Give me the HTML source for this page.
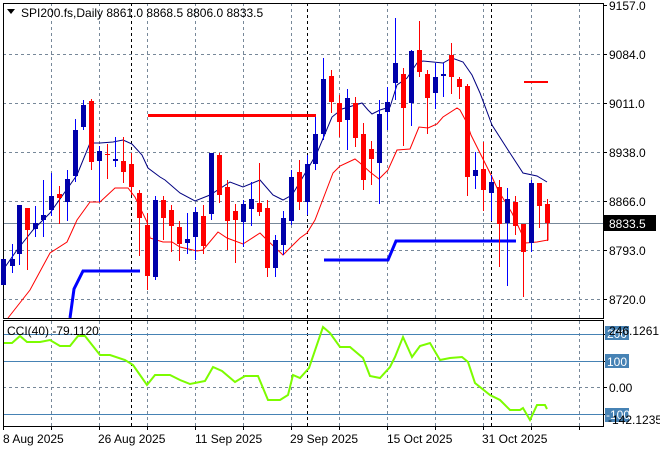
<!DOCTYPE html>
<html><head><meta charset="utf-8"><style>
html,body{margin:0;padding:0;background:#fff;}
svg{display:block;font-family:"Liberation Sans",Tahoma,sans-serif;font-size:12px;}
</style></head><body>
<svg width="660" height="450" viewBox="0 0 660 450" xmlns="http://www.w3.org/2000/svg">
<rect width="660" height="450" fill="#fff"/>
<g stroke="#778899" stroke-width="1" stroke-dasharray="3,3" fill="none">
<path d="M3 54.5H603M3 103.5H603M3 152.5H603M3 201.5H603M3 250.5H603M3 299.5H603M3 387.5H603"/>
<path d="M51.5 3V426M99.5 3V426M147.5 3V426M195.5 3V426M243.5 3V426M291.5 3V426M339.5 3V426M387.5 3V426M435.5 3V426M483.5 3V426M531.5 3V426M579.5 3V426"/>
</g>
<g stroke="#000" stroke-width="1" stroke-dasharray="3,3"><path d="M131.5 3V426M307.5 3V426M491.5 3V426"/></g>
<path d="M3 223.5H603" stroke="#778899"/>
<g stroke="#4682b4"><path d="M3 334.5H603M3 361.5H603M3 414.5H603"/></g>
<!-- MAs -->
<polyline fill="none" stroke="#000080" stroke-width="1" points="3,270 17,250 33,230 50,213 77,175 90,143 100,143 113,142 123,140 132,144 142,155 148,168 160,177 165,180 180,193 195,201 210,195 230,182 243,187 260,180 273,195 283,200 292,195 300,182 317,153 332,117 342,109 362,103 368,110 372,114 380,110 390,107 397,85 407,78 417,63 423,61 443,63 452,58 463,62 472,75 480,93 492,125 508,150 523,173 537,176 547,182"/>
<polyline fill="none" stroke="#ff0000" stroke-width="1" points="8,318 30,290 50,253 67,242 77,220 90,202 100,202 115,188 128,188 135,197 147,222 150,238 163,242 172,242 180,247 197,251 203,250 218,232 227,238 243,244 260,233 267,240 283,255 300,238 307,233 315,220 333,173 340,166 355,159 360,163 370,172 379,179 388,170 397,150 410,149 419,127 428,128 437,124 443,117 457,108 460,110 467,123 471,135 480,153 492,177 498,190 512,213 520,230 526,243 537,242 548,240 548,223"/>
<!-- candles -->
<g id="c"></g>
<path d="M148 115.5H316" stroke="#f00" stroke-width="3"/>
<path d="M524 82H548" stroke="#f00" stroke-width="2"/>
<polyline fill="none" stroke="#0000ff" stroke-width="3" points="70,318 74,289 83,271 140,271"/>
<polyline fill="none" stroke="#0000ff" stroke-width="3" points="324,260 388,260 396,241 516,241"/>
<!-- CCI -->
<polyline fill="none" stroke="#7cfc00" stroke-width="2" points="3,343 12,343 20,336 27,342 40,342 50,340 60,346 70,346 78,336 85,336 100,355 110,355 125,360 133,365 140,375 147,385 155,375 170,375 180,380 190,384 205,381 213,367 222,371 235,382 245,376 258,376 268,400 280,400 288,395 293,375 300,378 309,368 323,327 330,333 340,347 350,347 363,358 370,376 380,378 390,367 395,357 403,337 412,357 420,346 430,343 440,360 450,358 462,357 468,362 475,383 490,395 500,400 510,410 520,410 523,408 530,420 537,405 545,405 547,409"/>
<!-- frames -->
<g stroke="#000" fill="none" stroke-width="1">
<rect x="3.5" y="3.5" width="600" height="315"/>
<rect x="3.5" y="320.5" width="600" height="106"/>
</g>
<g stroke="#000"><path d="M603 5.5h4M603 54.5h4M603 103.5h4M603 152.5h4M603 201.5h4M603 250.5h4M603 299.5h4M603 334.5h4M603 361.5h4M603 387.5h4M603 414.5h4M3.5 426v4M51.5 426v4M99.5 426v4M147.5 426v4M195.5 426v4M243.5 426v4M291.5 426v4M339.5 426v4M387.5 426v4M435.5 426v4M483.5 426v4M531.5 426v4M579.5 426v4"/></g>
<!-- labels -->
<path d="M7 9h8l-4 5z" fill="#000"/>
<text x="21" y="17" fill="#000">SPI200.fs,Daily  8861.0 8868.5 8806.0 8833.5</text>
<g fill="#000">
<text x="609" y="10">9157.0</text>
<text x="609" y="59">9084.0</text>
<text x="609" y="108">9011.0</text>
<text x="609" y="157">8938.0</text>
<text x="609" y="206">8866.0</text>
<text x="609" y="255">8793.0</text>
<text x="609" y="304">8720.0</text>
</g>
<rect x="604" y="215" width="52" height="16" fill="#000"/>
<text x="609" y="228" fill="#fff">8833.5</text>
<rect x="605" y="326" width="24" height="14" fill="#4682b4"/>
<text x="607" y="338" fill="#fff">200</text>
<text x="609" y="335" fill="#000">246.1261</text>
<rect x="605" y="354" width="24" height="14" fill="#4682b4"/>
<text x="607" y="366" fill="#fff">100</text>
<text x="609" y="392" fill="#000">0.00</text>
<rect x="605" y="408" width="24" height="14" fill="#4682b4"/>
<text x="606" y="419" fill="#fff">-100</text>
<text x="608" y="424" fill="#000">-142.1235</text>
<text x="7" y="335" fill="#000">CCI(40) -79.1120</text>
<g fill="#000">
<text x="3" y="443">8 Aug 2025</text>
<text x="98" y="443">26 Aug 2025</text>
<text x="195" y="443">11 Sep 2025</text>
<text x="290" y="443">29 Sep 2025</text>
<text x="387" y="443">15 Oct 2025</text>
<text x="482" y="443">31 Oct 2025</text>
</g>
<g id="cc">
<!-- b/r x bodyTop bodyBot wickTop wickBot -->
</g>
<g>
<path stroke="#0000ff" d="M3.5 259V285M12.5 244V273M19.5 205V265M35.5 206V237M43.5 180V237M51.5 173V216M67.5 170V221M75.5 119V182M83.5 100V130M99.5 146V202M115.5 137V167M155.5 196V280M187.5 213V254M195.5 207V260M211.5 153V220M243.5 200V247M251.5 182V226M275.5 235V277M283.5 211V255M291.5 170V225M307.5 155V215M315.5 117V170M323.5 58V140M347.5 89V150M379.5 100V204M387.5 87V130M395.5 18V100M411.5 50V126M435.5 63V109M443.5 63V97M475.5 152V189M491.5 175V221M507.5 188V286M531.5 180V252"/>
<path stroke="#ff0000" d="M27.5 208V270M59.5 186V224M91.5 99V170M107.5 144V179M123.5 137V183M131.5 153V195M139.5 190V256M147.5 213V290M163.5 196V240M171.5 205V252M179.5 221V261M203.5 205V254M219.5 153V203M227.5 180V250M235.5 204V263M259.5 163V216M267.5 200V277M299.5 160V210M331.5 70V113M339.5 95V137M355.5 97V147M363.5 123V190M371.5 141V185M403.5 68V146M419.5 21V77M427.5 70V134M451.5 43V94M459.5 77V99M467.5 84V196M483.5 142V211M499.5 180V267M515.5 196V235M523.5 224V297M539.5 183V228M547.5 199V241"/>
<g fill="#0000aa">
<rect x="1" y="259" width="5" height="26"/><rect x="10" y="259" width="5" height="7"/><rect x="17" y="205" width="5" height="49"/><rect x="33" y="223" width="5" height="6"/><rect x="41" y="215" width="5" height="5"/><rect x="49" y="196" width="5" height="14"/><rect x="65" y="179" width="5" height="23"/><rect x="73" y="130" width="5" height="46"/><rect x="81" y="105" width="5" height="22"/><rect x="97" y="151" width="5" height="10"/><rect x="113" y="159" width="5" height="2"/><rect x="153" y="200" width="5" height="77"/><rect x="185" y="239" width="5" height="4"/><rect x="193" y="212" width="5" height="25"/><rect x="209" y="153" width="5" height="61"/><rect x="241" y="204" width="5" height="18"/><rect x="249" y="199" width="5" height="10"/><rect x="273" y="240" width="5" height="28"/><rect x="281" y="218" width="5" height="27"/><rect x="289" y="177" width="5" height="44"/><rect x="305" y="164" width="5" height="38"/><rect x="313" y="134" width="5" height="30"/><rect x="321" y="79" width="5" height="55"/><rect x="345" y="98" width="5" height="22"/><rect x="377" y="114" width="5" height="49"/><rect x="385" y="102" width="5" height="10"/><rect x="393" y="63" width="5" height="20"/><rect x="409" y="51" width="5" height="52"/><rect x="433" y="77" width="5" height="16"/><rect x="441" y="74" width="5" height="2"/><rect x="473" y="170" width="5" height="6"/><rect x="489" y="182" width="5" height="11"/><rect x="505" y="199" width="5" height="24"/><rect x="529" y="183" width="5" height="60"/>
</g>
<g fill="#ff0000">
<rect x="25" y="208" width="5" height="22"/><rect x="57" y="194" width="5" height="4"/><rect x="89" y="101" width="5" height="61"/><rect x="105" y="154" width="5" height="1"/><rect x="121" y="161" width="5" height="11"/><rect x="129" y="164" width="5" height="23"/><rect x="137" y="193" width="5" height="25"/><rect x="145" y="225" width="5" height="51"/><rect x="161" y="200" width="5" height="18"/><rect x="169" y="210" width="5" height="16"/><rect x="177" y="227" width="5" height="17"/><rect x="201" y="216" width="5" height="30"/><rect x="217" y="155" width="5" height="40"/><rect x="225" y="187" width="5" height="34"/><rect x="233" y="211" width="5" height="9"/><rect x="257" y="203" width="5" height="9"/><rect x="265" y="208" width="5" height="60"/><rect x="297" y="172" width="5" height="30"/><rect x="329" y="76" width="5" height="26"/><rect x="337" y="103" width="5" height="19"/><rect x="353" y="103" width="5" height="35"/><rect x="361" y="134" width="5" height="46"/><rect x="369" y="149" width="5" height="10"/><rect x="401" y="74" width="5" height="34"/><rect x="417" y="50" width="5" height="22"/><rect x="425" y="74" width="5" height="24"/><rect x="449" y="55" width="5" height="22"/><rect x="457" y="79" width="5" height="8"/><rect x="465" y="86" width="5" height="91"/><rect x="481" y="169" width="5" height="21"/><rect x="497" y="187" width="5" height="37"/><rect x="513" y="202" width="5" height="24"/><rect x="521" y="224" width="5" height="28"/><rect x="537" y="183" width="5" height="23"/><rect x="545" y="204" width="5" height="19"/>
</g>
</g>
</svg>
</body></html>
